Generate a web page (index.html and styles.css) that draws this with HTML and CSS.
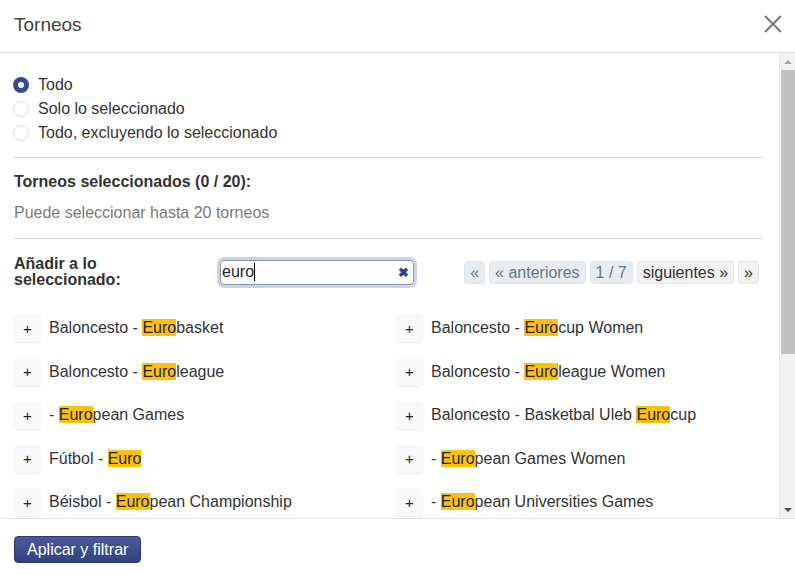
FILE: index.html
```html
<!DOCTYPE html>
<html lang="es">
<head>
<meta charset="utf-8">
<title>Torneos</title>
<link rel="stylesheet" href="styles.css">
</head>
<body>
<div class="modal">
  <div class="modal-header">
    <h1 class="modal-title">Torneos</h1>
    <button class="close" aria-label="Cerrar">
      <svg width="18" height="18" viewBox="0 0 18 18"><path d="M1 1 L17 17 M17 1 L1 17" stroke="#777" stroke-width="2" fill="none"/></svg>
    </button>
  </div>
  <div class="modal-main">
    <div class="modal-body">
      <div class="radios">
        <label class="radio"><span class="dot checked"></span>Todo</label>
        <label class="radio"><span class="dot"></span>Solo lo seleccionado</label>
        <label class="radio"><span class="dot"></span>Todo, excluyendo lo seleccionado</label>
      </div>
      <hr class="sep first">
      <div class="sel-title">Torneos seleccionados (0 / 20):</div>
      <div class="sel-hint">Puede seleccionar hasta 20 torneos</div>
      <hr class="sep">
      <div class="add-row">
        <div class="add-label">Añadir a lo<br>seleccionado:</div>
        <div class="search">
          <span class="search-text">euro<span class="caret"></span></span>
          <span class="clear">✖</span>
        </div>
        <div class="pager">
          <span class="pg off">«</span>
          <span class="pg off">« anteriores</span>
          <span class="pg off">1 / 7</span>
          <span class="pg">siguientes »</span>
          <span class="pg">»</span>
        </div>
      </div>
      <div class="list">
        <div class="item"><span class="plus">+</span><span>Baloncesto - <mark>Euro</mark>basket</span></div>
        <div class="item"><span class="plus">+</span><span>Baloncesto - <mark>Euro</mark>cup Women</span></div>
        <div class="item"><span class="plus">+</span><span>Baloncesto - <mark>Euro</mark>league</span></div>
        <div class="item"><span class="plus">+</span><span>Baloncesto - <mark>Euro</mark>league Women</span></div>
        <div class="item"><span class="plus">+</span><span>- <mark>Euro</mark>pean Games</span></div>
        <div class="item"><span class="plus">+</span><span>Baloncesto - Basketbal Uleb <mark>Euro</mark>cup</span></div>
        <div class="item"><span class="plus">+</span><span>Fútbol - <mark>Euro</mark></span></div>
        <div class="item"><span class="plus">+</span><span>- <mark>Euro</mark>pean Games Women</span></div>
        <div class="item"><span class="plus">+</span><span>Béisbol - <mark>Euro</mark>pean Championship</span></div>
        <div class="item"><span class="plus">+</span><span>- <mark>Euro</mark>pean Universities Games</span></div>
      </div>
    </div>
    <div class="vscroll" aria-hidden="true">
      <div class="sb-btn"><span class="tri-up"></span></div>
      <div class="sb-thumb"></div>
      <div class="sb-space"></div>
      <div class="sb-btn"><span class="tri-down"></span></div>
    </div>
  </div>
  <div class="modal-footer">
    <button class="btn-primary">Aplicar y filtrar</button>
  </div>
</div>
</body>
</html>
```

FILE: styles.css
```css
* { box-sizing: border-box; }
html, body { margin: 0; padding: 0; }
body {
  font-family: "Liberation Sans", Arial, sans-serif;
  font-size: 16px;
  color: #333;
  background: #fff;
  overflow: hidden;
}
.modal {
  width: 795px;
  height: 575px;
  display: flex;
  flex-direction: column;
}
.modal-header {
  height: 53px;
  flex: none;
  display: flex;
  align-items: center;
  justify-content: space-between;
  padding: 0 13px 4px 14px;
  border-bottom: 1px solid #dee2e6;
}
.modal-title {
  margin: 0;
  font-size: 19px;
  font-weight: normal;
  color: #444;
  line-height: 24px;
  padding-top: 2px;
}
.close {
  border: 0;
  background: none;
  padding: 0;
  width: 18px;
  height: 18px;
  display: flex;
}
.modal-main {
  flex: 1;
  min-height: 0;
  display: flex;
}
.modal-body {
  flex: 1;
  overflow: hidden;
  padding: 20px 16px 20px 14px;
}
.vscroll {
  width: 16px;
  flex: none;
  background: #f1f1f1;
  border-left: 1px solid #e8e8e8;
  display: flex;
  flex-direction: column;
}
.sb-btn {
  height: 17px;
  flex: none;
  display: flex;
  align-items: center;
  justify-content: center;
}
.tri-up {
  width: 0;
  height: 0;
  border-left: 4px solid transparent;
  border-right: 4px solid transparent;
  border-bottom: 4px solid #a3a3a3;
}
.tri-down {
  width: 0;
  height: 0;
  border-left: 4px solid transparent;
  border-right: 4px solid transparent;
  border-top: 4px solid #505050;
}
.sb-thumb {
  height: 284px;
  flex: none;
  margin-left: 1px;
  background: #c1c1c1;
}
.sb-space { flex: 1; }
.radios { display: flex; flex-direction: column; }
.radio {
  display: flex;
  align-items: center;
  height: 24px;
  line-height: 24px;
}
.dot {
  width: 16px;
  height: 16px;
  border-radius: 50%;
  border: 1px solid #dcdcdc;
  background: #fff;
  margin: 0 9px 0 -1px;
}
.dot.checked {
  border: 5px solid #3b4a8a;
  background: #fff;
}
.sep {
  border: 0;
  border-top: 1px solid #d6d6d6;
  margin: 13px 0 12px;
}
.sep.first { margin-top: 12px; }
.sel-title {
  font-weight: bold;
  line-height: 24px;
}
.sel-hint {
  color: #7a7a7a;
  line-height: 24px;
  margin-top: 7px;
}
.add-row {
  display: flex;
  align-items: center;
  height: 34px;
  margin-top: 16px;
}
.add-label {
  width: 206px;
  font-weight: bold;
  line-height: 16px;
}
.search {
  width: 194px;
  height: 25px;
  border: 1px solid #8791b6;
  border-radius: 4px;
  box-shadow: 0 0 0 3px #cfd4e5;
  display: flex;
  align-items: center;
  justify-content: space-between;
  padding: 0 4px 0 1px;
}
.search-text { display: flex; align-items: center; color: #222; }
.caret {
  display: inline-block;
  width: 1px;
  height: 18px;
  background: #000;
}
.clear {
  color: #2e4886;
  font-size: 13px;
  font-weight: bold;
}
.pager {
  margin-left: auto;
  margin-right: 4px;
  display: flex;
  gap: 4px;
}
.pg {
  height: 23px;
  line-height: 21px;
  padding: 0 5px;
  border: 1px solid #e2e4e8;
  border-radius: 4px;
  background: #f1f1f1;
  color: #333;
}
.pg.off {
  background: #e9ecef;
  color: #6c757d;
}
.list {
  display: grid;
  grid-template-columns: 382px 1fr;
  row-gap: 15.5px;
  margin-top: 25px;
}
.item {
  display: flex;
  align-items: center;
  height: 28px;
}
.plus {
  width: 27px;
  height: 28px;
  border-radius: 4px;
  background: #f8f9fa;
  box-shadow: 0 1px 2px rgba(0,0,0,0.08);
  display: flex;
  align-items: center;
  justify-content: center;
  margin-right: 8px;
  font-size: 15px;
  color: #222;
}
mark {
  background: #ffc107;
  color: #222;
}
.modal-footer {
  height: 57px;
  flex: none;
  border-top: 1px solid #dee2e6;
  padding: 17px 14px 0;
}
.btn-primary {
  display: inline-flex;
  align-items: center;
  font-family: "Liberation Sans", Arial, sans-serif;
  font-size: 16px;
  color: #fff;
  height: 27px;
  padding: 0 12px;
  border: 1px solid #2e3a70;
  border-radius: 4px;
  background: linear-gradient(#4a5a9a, #34427e);
}
```
